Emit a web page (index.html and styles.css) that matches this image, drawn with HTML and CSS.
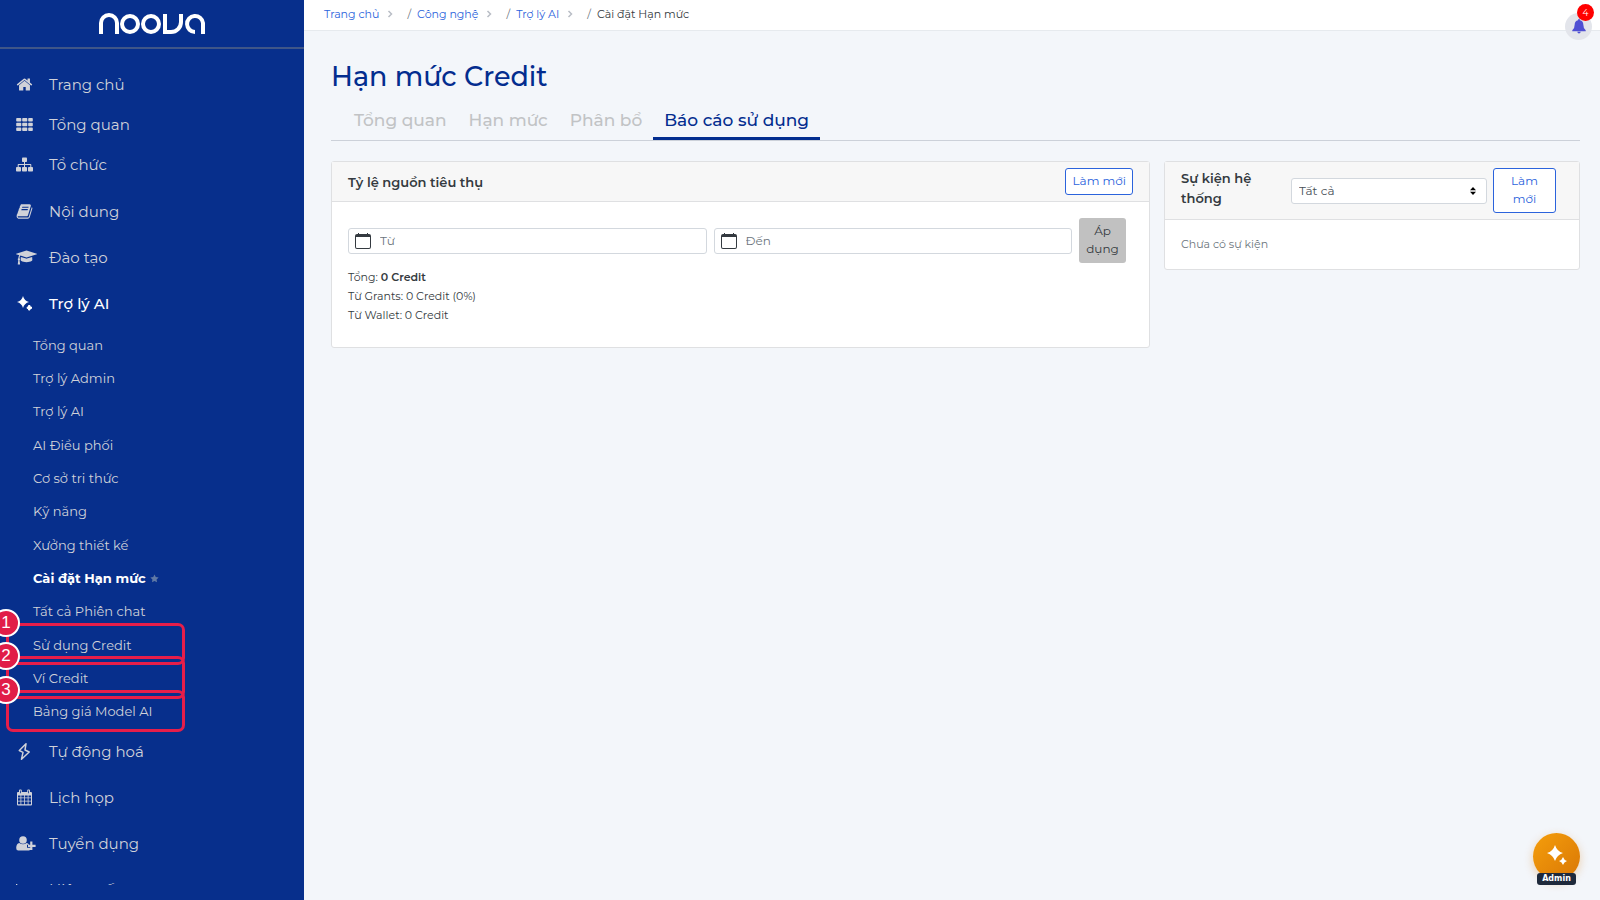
FILE: index.html
```html
<!DOCTYPE html>
<html lang="vi">
<head>
    <meta charset="UTF-8">
    <meta name="viewport" content="width=device-width, initial-scale=1.0">
    <title>Hạn mức Credit</title>
    <link rel="stylesheet" href="styles.css">
</head>
<body>
    <aside class="sidebar">
        <a class="logo" href="#" aria-label="noova">
            <svg viewBox="0 0 106 22" width="106" height="22" fill="none" stroke="#fff" stroke-width="4">
                <path d="M2 21V10a8 8 0 0 1 16 0v11"/>
                <circle cx="31" cy="11" r="8"/>
                <circle cx="52" cy="11" r="8"/>
                <path d="M66 1v18h6a10 10 0 0 0 10-10V1"/>
                <path d="M104 21V10a8 8 0 1 0-8 9"/>
            </svg>
        </a>
        <nav class="menu">
            <ul class="menu-list">
                <li><a class="menu-link" href="#">
                    <svg class="icon" viewBox="0 0 1792 1792"><path d="M1472 992v480q0 26-19 45t-45 19h-384v-384h-256v384h-384q-26 0-45-19t-19-45v-480q0-1 .5-3t.5-3l575-474 575 474q1 2 1 6zm223-69l-62 74q-8 9-21 11h-3q-13 0-21-7l-692-577-692 577q-12 8-24 7-13-2-21-11l-62-74q-8-10-7-23.5t11-21.5l719-599q32-26 76-26t76 26l244 204v-195q0-14 9-23t23-9h192q14 0 23 9t9 23v408l219 182q10 8 11 21.5t-7 23.5z"/></svg>
                    Trang chủ</a></li>
                <li><a class="menu-link" href="#">
                    <svg class="icon" viewBox="0 0 17 17"><path d="M1 2h3.500a.8.8 0 0 1 .8.800v2a.8.8 0 0 1-.8.800H1a.8.8 0 0 1-.8-.800v-2A.8.8 0 0 1 1 2zm6 0h3.500a.8.8 0 0 1 .8.800v2a.8.8 0 0 1-.8.800H7a.8.8 0 0 1-.8-.800v-2A.8.8 0 0 1 7 2zm6 0h3a.8.8 0 0 1 .8.800v2a.8.8 0 0 1-.8.800h-3a.8.8 0 0 1-.8-.800v-2A.8.8 0 0 1 13 2zM1 6.700h3.500a.8.8 0 0 1 .8.800v2a.8.8 0 0 1-.8.800H1a.8.8 0 0 1-.8-.800v-2a.8.8 0 0 1 .8-.8zm6 0h3.500a.8.8 0 0 1 .8.800v2a.8.8 0 0 1-.8.800H7a.8.8 0 0 1-.8-.800v-2a.8.8 0 0 1 .8-.8zm6 0h3a.8.8 0 0 1 .8.800v2a.8.8 0 0 1-.8.800h-3a.8.8 0 0 1-.8-.800v-2a.8.8 0 0 1 .8-.8zM1 11.400h3.500a.8.8 0 0 1 .8.800v2a.8.8 0 0 1-.8.800H1a.8.8 0 0 1-.8-.800v-2a.8.8 0 0 1 .8-.8zm6 0h3.500a.8.8 0 0 1 .8.800v2a.8.8 0 0 1-.8.800H7a.8.8 0 0 1-.8-.800v-2a.8.8 0 0 1 .8-.8zm6 0h3a.8.8 0 0 1 .8.800v2a.8.8 0 0 1-.8.800h-3a.8.8 0 0 1-.8-.800v-2a.8.8 0 0 1 .8-.8z"/></svg>
                    Tổng quan</a></li>
                <li><a class="menu-link" href="#">
                    <svg class="icon" viewBox="0 0 17 17"><rect x="6" y="1.500" width="5" height="4.500" rx=".8"/><rect x="0" y="11" width="5" height="4.500" rx=".8"/><rect x="6" y="11" width="5" height="4.500" rx=".8"/><rect x="12" y="11" width="5" height="4.500" rx=".8"/><path d="M8 5h1v3h5.500q.8 0 .8.800V12h-1V9H9v3H8V9H2.700v3h-1V8.800q0-.8.800-.8H8z"/></svg>
                    Tổ chức</a></li>
            </ul>
            <ul class="menu-list menu-groups">
                <li><a class="menu-link" href="#">
                    <svg class="icon" viewBox="0 0 1792 1792"><path d="M1703 478q40 57 18 129l-275 906q-19 64-76.500 107.500t-122.500 43.500h-923q-77 0-148.500-53.500t-99.500-131.500q-24-67-2-127 0-4 3-27t4-37q1-8-3-21.500t-3-19.500q2-11 8-21t16.500-23.500 16.500-23.500q23-38 45-91.500t30-91.500q3-10 .5-30t-.5-28q3-11 17-28t17-23q21-36 42-92t25-90q1-9-2.500-32t.5-28q4-13 22-30.500t22-22.500q19-26 42.500-84.500t27.500-96.500q1-8-3-25.500t-2-26.500q2-8 9-18t18-23 17-21q8-12 16.500-30.500t15-35 16-36 19.500-32 26.500-23.500 36-11.500 47.500 5.500l-1 3q38-9 51-9h761q74 0 114 56t18 130l-274 906q-36 119-71.500 153.500t-128.500 34.500h-869q-27 0-38 15-11 16-1 43 24 70 144 70h923q29 0 56-15.500t35-41.500l300-987q7-22 5-57 38 15 59 43zm-1064 2q-4 13 2 22.500t20 9.500h608q13 0 25.500-9.500t16.500-22.500l21-64q4-13-2-22.500t-20-9.500h-608q-13 0-25.500 9.500t-16.500 22.500zm-83 256q-4 13 2 22.500t20 9.500h608q13 0 25.500-9.500t16.500-22.500l21-64q4-13-2-22.500t-20-9.500h-608q-13 0-25.500 9.500t-16.500 22.500z"/></svg>
                    Nội dung</a></li>
                <li><a class="menu-link" href="#">
                    <svg class="icon icon-wide" viewBox="0 0 2304 1792"><path d="M1774 836l18 316q4 69-82 128t-235 93.500-323 34.500-323-34.500-235-93.500-82-128l18-316 574 181q22 7 48 7t48-7zm530-324q0 23-22 31l-1120 352q-4 1-10 1t-10-1l-652-206q-43 34-71 111.500t-34 178.500q63 36 63 109 0 69-58 107l58 433q2 14-8 25-9 11-24 11h-192q-15 0-24-11-10-11-8-25l58-433q-58-38-58-107 0-73 65-111 11-207 98-330l-333-104q-22-8-22-31t22-31l1120-352q4-1 10-1t10 1l1120 352q22 8 22 31z"/></svg>
                    Đào tạo</a></li>
                <li class="open">
                    <a class="menu-link" href="#">
                        <svg class="icon" viewBox="0 0 17 17"><path d="M7 1q1.300 5 6 6-4.700 1.300-6 6-1.300-4.700-6-6 4.700-1 6-6z"/><path d="M11.200 12h1.300v-1.500h1.500V12h1.500v1.500H14V15h-1.500v-1.500h-1.300z" stroke="currentColor"/></svg>
                        Trợ lý AI</a>
                    <ul class="submenu">
                        <li><a href="#">Tổng quan</a></li>
                        <li><a href="#">Trợ lý Admin</a></li>
                        <li><a href="#">Trợ lý AI</a></li>
                        <li><a href="#">AI Điều phối</a></li>
                        <li><a href="#">Cơ sở tri thức</a></li>
                        <li><a href="#">Kỹ năng</a></li>
                        <li><a href="#">Xưởng thiết kế</a></li>
                        <li><a class="current" href="#">Cài đặt Hạn mức
                            <svg class="star" viewBox="0 0 10 10"><path d="M5 .5l1.400 2.900 3.200.5-2.300 2.200.5 3.200L5 7.800 2.200 9.300l.5-3.200L.4 3.900l3.200-.5z"/></svg></a></li>
                        <li><a href="#">Tất cả Phiên chat</a></li>
                        <li class="marked"><a href="#">Sử dụng Credit</a><span class="mark">1</span></li>
                        <li class="marked"><a href="#">Ví Credit</a><span class="mark">2</span></li>
                        <li class="marked"><a href="#">Bảng giá Model AI</a><span class="mark">3</span></li>
                    </ul>
                </li>
                <li><a class="menu-link" href="#">
                    <svg class="icon" viewBox="0 0 17 17" fill="none" stroke="currentColor" stroke-width="1.500" stroke-linejoin="round"><path class="line" d="M10 .8L3.300 7.500l3.700 1.800-1.500 6.900 7.700-7.200-4.200-2z"/></svg>
                    Tự động hoá</a></li>
                <li><a class="menu-link" href="#">
                    <svg class="icon" viewBox="0 0 17 17"><path fill-rule="evenodd" d="M2 3h1V1.500Q3 .5 4 .5h.8q1 0 1 1V3h5.400V1.500q0-1 1-1h.8q1 0 1 1V3h1q1 0 1 1v11.500q0 1-1 1H2q-1 0-1-1V4q0-1 1-1zm0 3.500v2h2.500v-2zm3.300 0v2h2.800v-2zm3.600 0v2h2.800v-2zm3.600 0v2H15v-2zM2 9.300v2.500h2.500V9.300zm3.300 0v2.500h2.800V9.300zm3.600 0v2.500h2.800V9.300zm3.600 0v2.500H15V9.300zM2 12.600v2.700h2.500v-2.700zm3.300 0v2.700h2.800v-2.700zm3.600 0v2.700h2.800v-2.700zm3.600 0v2.700H15v-2.700zM4 1.500v2.700h.8V1.500zm8.200 0v2.700h.8V1.500z"/></svg>
                    Lịch họp</a></li>
                <li><a class="menu-link" href="#">
                    <svg class="icon icon-wide" viewBox="0 0 21 17"><circle cx="7" cy="5" r="3.800"/><path d="M3.300 8q3.700 2.600 7.400 0 1.500.3 2.300 1.800h-2v3h3.200v2.300q-.6.400-1.500.4H2.300Q.2 15.500.2 13q.1-4.400 3.100-5zM14.200 6.500h2.200v3.200h3.200v2.200h-3.200v3.200h-2.200v-3.200H12V9.700h2.200z"/></svg>
                    Tuyển dụng</a></li>
                <li><a class="menu-link" href="#">
                    <svg class="icon" viewBox="0 0 17 17"><path d="M0 3h1.300v11.500H17V16H0z"/><path d="M2.500 11l4-4 2.300 2.300 4-4L11.300 4H16v4.500l-1.500-1.500-5.700 5.200L6.500 10l-2.500 2.500z"/></svg>
                    Hiệu suất</a></li>
            </ul>
        </nav>
    </aside>

    <div class="page">
        <header class="topbar">
            <ol class="breadcrumb">
                <li><a href="#">Trang chủ</a><svg class="chevron" viewBox="0 0 6 8"><path d="M1.500 1l3 3-3 3"/></svg></li>
                <li><a href="#">Công nghệ</a><svg class="chevron" viewBox="0 0 6 8"><path d="M1.500 1l3 3-3 3"/></svg></li>
                <li><a href="#">Trợ lý AI</a><svg class="chevron" viewBox="0 0 6 8"><path d="M1.500 1l3 3-3 3"/></svg></li>
                <li>Cài đặt Hạn mức</li>
            </ol>
            <button class="bell" type="button" aria-label="Thông báo">
                <svg viewBox="0 0 14 15" width="14" height="15"><path d="M7 0q1 0 1 1.200 3.300.8 3.300 4.300 0 4 2.400 5.700v1H.3v-1q2.400-1.700 2.400-5.700Q2.700 2 6 1.200 6 0 7 0zM5.300 12.800h3.400Q8.500 14.500 7 14.500t-1.700-1.700z"/></svg>
                <span class="bell-count">4</span>
            </button>
        </header>

        <main class="content">
            <h1>Hạn mức Credit</h1>
            <nav class="tabs">
                <a href="#">Tổng quan</a>
                <a href="#">Hạn mức</a>
                <a href="#">Phân bổ</a>
                <a class="active" href="#">Báo cáo sử dụng</a>
            </nav>

            <div class="cards">
                <section class="card">
                    <div class="card-header">
                        <h2>Tỷ lệ nguồn tiêu thụ</h2>
                        <button class="btn btn-outline" type="button">Làm mới</button>
                    </div>
                    <div class="card-body">
                        <form class="filter">
                            <label class="date-field">
                                <svg class="calendar" viewBox="0 0 16 16"><path fill-rule="evenodd" d="M3 0h1v1h8V0h1v1h1q2 0 2 2v11q0 2-2 2H2q-2 0-2-2V3q0-2 2-2h1zM1 4v10q0 1 1 1h12q1 0 1-1V4z"/></svg>
                                <input type="text" placeholder="Từ" aria-label="Từ">
                            </label>
                            <label class="date-field">
                                <svg class="calendar" viewBox="0 0 16 16"><path fill-rule="evenodd" d="M3 0h1v1h8V0h1v1h1q2 0 2 2v11q0 2-2 2H2q-2 0-2-2V3q0-2 2-2h1zM1 4v10q0 1 1 1h12q1 0 1-1V4z"/></svg>
                                <input type="text" placeholder="Đến" aria-label="Đến">
                            </label>
                            <button class="btn btn-apply" type="button">Áp dụng</button>
                        </form>
                        <div class="totals">
                            <div>Tổng: <strong>0 Credit</strong></div>
                            <div>Từ Grants: 0 Credit (0%)</div>
                            <div>Từ Wallet: 0 Credit</div>
                        </div>
                    </div>
                </section>

                <section class="card">
                    <div class="card-header events-header">
                        <h2>Sự kiện hệ thống</h2>
                        <div class="select-wrap">
                            <select aria-label="Loại sự kiện">
                                <option>Tất cả</option>
                            </select>
                            <svg class="select-arrows" viewBox="0 0 6 8"><path d="M0 3.300L3 0l3 3.300zM0 4.700h6L3 8z"/></svg>
                        </div>
                        <button class="btn btn-outline" type="button">Làm mới</button>
                    </div>
                    <div class="card-body">
                        <p class="empty">Chưa có sự kiện</p>
                    </div>
                </section>
            </div>
        </main>
    </div>

    <button class="assistant" type="button">
        <svg viewBox="0 0 20 20" width="20" height="20" fill="#fff"><path d="M8 0q2 6.500 8 8-6 2-8 8-2-6-8-8 6-1.500 8-8z"/><path d="M16 12q1 3 4 4-3 1-4 4-1-3-4-4 3-1 4-4z"/></svg>
        <span class="assistant-label">Admin</span>
    </button>
</body>
</html>
```
FILE: styles.css
```css
* {
    box-sizing: border-box;
}
body {
    margin: 0;
    display: flex;
    min-height: 100vh;
    font-family: Montserrat, Inter, sans-serif;
    font-size: 12px;
    color: #343a40;
    background-color: #f3f6fa;
}
a {
    color: inherit;
    text-decoration: none;
}
ul,
ol {
    list-style: none;
    margin: 0;
    padding: 0;
}
button,
input,
select {
    font-family: inherit;
}

/* Sidebar */
.sidebar {
    flex: 0 0 304px;
    height: 100vh;
    padding-bottom: 15px;
    display: flex;
    flex-direction: column;
    background-color: #072f8c;
    color: #d0d2d9;
}
.logo {
    display: flex;
    justify-content: center;
    padding: 13px 0 12px;
    border-bottom: 2px solid #3f5688;
}
.menu {
    flex: 1;
    min-height: 0;
    overflow: hidden;
    padding-top: 15px;
}
.menu-link {
    display: flex;
    align-items: center;
    height: 40px;
    padding-left: 16px;
    font-size: 15px;
}
.menu-groups {
    margin-top: 4px;
}
.menu-groups .menu-link {
    height: 46px;
}
.icon {
    width: 17px;
    height: 17px;
    margin-right: 16px;
    fill: currentColor;
}
.icon-wide {
    width: 21px;
    margin-right: 12px;
}
.icon .line {
    fill: none;
}
.open > .menu-link {
    color: #fff;
    font-weight: 500;
}
.submenu {
    display: grid;
    grid-auto-rows: 1fr;
    height: 400px;
    margin-top: 2px;
}
.submenu li {
    display: flex;
    align-items: center;
    padding-left: 33px;
    font-size: 13px;
}
.submenu .current {
    color: #fff;
    font-weight: 700;
}
.star {
    width: 9px;
    height: 9px;
    margin-left: 1px;
    fill: #6079a5;
}
.marked {
    position: relative;
}
.marked::after {
    content: "";
    position: absolute;
    top: -5px;
    bottom: -4px;
    left: 6px;
    box-sizing: border-box;
    width: 179px;
    border: 3px solid #e61e4a;
    border-radius: 7px;
}
.mark {
    position: absolute;
    z-index: 1;
    top: -19px;
    left: -8px;
    width: 28px;
    height: 28px;
    border: 2px solid #fff;
    border-radius: 50%;
    background-color: #e11d48;
    color: #fff;
    font: 17px/24px "Liberation Sans", sans-serif;
    text-align: center;
}

/* Top bar */
.page {
    flex: 1;
    min-width: 0;
}
.topbar {
    position: relative;
    height: 31px;
    padding-left: 20px;
    background-color: #fff;
    border-bottom: 1px solid #e6eaee;
}
.breadcrumb {
    display: flex;
    line-height: 29px;
    font-size: 11px;
}
.breadcrumb a {
    color: #2b63dc;
}
.breadcrumb li + li::before {
    content: "/";
    margin: 0 6px 0 14px;
    color: #6c757d;
}
.chevron {
    width: 6px;
    height: 8px;
    margin-left: 8px;
    fill: none;
    stroke: #b9bec6;
    stroke-width: 1.5;
}
.bell {
    position: absolute;
    top: 13px;
    right: 8px;
    width: 27px;
    height: 27px;
    display: flex;
    align-items: center;
    justify-content: center;
    padding: 0;
    border: none;
    border-radius: 50%;
    background-color: #e3e5eb;
    fill: #4f4fd3;
}
.bell-count {
    position: absolute;
    top: -9px;
    right: -2px;
    width: 17px;
    height: 17px;
    border-radius: 50%;
    background-color: #f00;
    color: #fff;
    font-size: 9px;
    line-height: 17px;
}

/* Content */
.content {
    padding: 28px 20px 20px 27px;
}
h1 {
    margin: 0;
    font-size: 27px;
    line-height: 36px;
    font-weight: 500;
    color: #032d8f;
}
.tabs {
    display: flex;
    margin: 9px 0 20px;
    padding-left: 12px;
    border-bottom: 1px solid #ccd1d9;
    font-size: 17px;
    line-height: 33px;
    font-weight: 500;
    color: #c1c3c5;
}
.tabs a {
    padding: 0 11px;
    border-bottom: 3px solid transparent;
}
.tabs .active {
    color: #032d8f;
    border-color: #032d8f;
}
.cards {
    display: grid;
    grid-template-columns: 63fr 32fr;
    gap: 14px;
    align-items: start;
}
.card {
    background-color: #fff;
    border: 1px solid #dfe0e2;
    border-radius: 3px;
}
.card-header {
    display: flex;
    align-items: center;
    justify-content: space-between;
    padding: 6px 16px;
    background-color: #f7f7f7;
    border-bottom: 1px solid #dfe0e2;
}
.card-header h2 {
    margin: 0;
    font-size: 13px;
    line-height: 20px;
    font-weight: 600;
}
.events-header {
    gap: 6px;
    padding-right: 23px;
}
.events-header h2 {
    flex: 0 0 104px;
    align-self: flex-start;
}
.events-header .btn {
    flex: 0 0 63px;
}
.btn {
    padding: 3px 6px 4px;
    border: 1px solid transparent;
    border-radius: 3px;
    font-size: 12px;
    line-height: 18px;
}
.btn-outline {
    border-color: #2b63dc;
    background-color: #fff;
    color: #2b63dc;
}
.btn-apply {
    flex: 0 0 47px;
    background-color: #c1c1c1;
    color: #343a40;
}
.select-wrap {
    position: relative;
    flex: 1;
}
.select-wrap select {
    display: block;
    width: 100%;
    height: 26px;
    padding: 0 7px;
    appearance: none;
    border: 1px solid #d3d8de;
    border-radius: 3px;
    background-color: #fff;
    color: #495057;
    font-size: 12px;
}
.select-arrows {
    position: absolute;
    top: 9px;
    right: 11px;
    width: 6px;
    height: 8px;
    pointer-events: none;
}
.card-body {
    padding: 16px;
}
.filter {
    display: flex;
    align-items: center;
    gap: 7px;
    padding-right: 7px;
}
.date-field {
    flex: 1;
    display: flex;
    align-items: center;
    height: 26px;
    padding-left: 6px;
    border: 1px solid #d3d8de;
    border-radius: 3px;
}
.calendar {
    width: 16px;
    height: 16px;
    fill: #343a40;
}
.date-field input {
    flex: 1;
    min-width: 0;
    padding: 0 9px;
    border: none;
    outline: none;
    background: none;
    font-size: 12px;
}
.date-field input::placeholder {
    color: #6c757d;
}
.totals {
    padding: 5px 0 6px;
    font-size: 11px;
    line-height: 19px;
}
.totals strong {
    font-weight: 600;
}
.empty {
    margin: 0;
    line-height: 17px;
    font-size: 11px;
    color: #6c757d;
}

/* Floating assistant button */
.assistant {
    position: fixed;
    right: 20px;
    bottom: 20px;
    width: 47px;
    height: 47px;
    padding: 0;
    border: none;
    border-radius: 50%;
    background: linear-gradient(135deg, #f59e0b, #d97706);
    box-shadow: 0 3px 10px rgba(217, 119, 6, 0.3);
}
.assistant-label {
    position: absolute;
    left: 4px;
    bottom: -5px;
    width: 39px;
    border-radius: 3px;
    background-color: #1e293b;
    color: #fff;
    font: 700 8px/12px "DejaVu Sans", sans-serif;
}
```
